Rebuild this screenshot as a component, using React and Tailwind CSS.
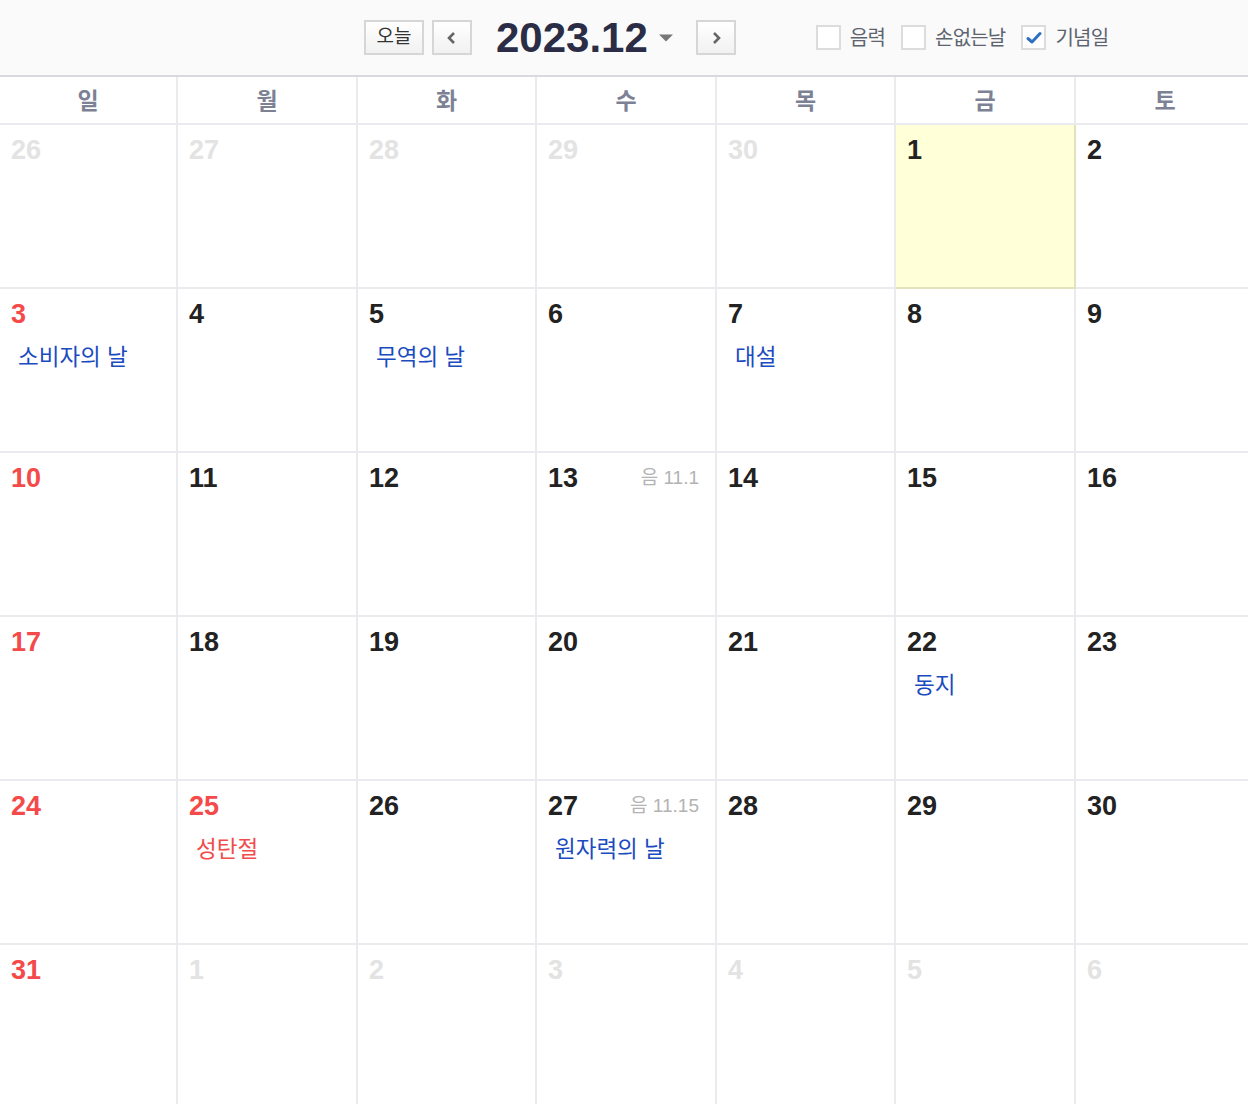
const days = ["일", "월", "화", "수", "목", "금", "토"];

const weeks = [
  [
    { d: 26, other: true },
    { d: 27, other: true },
    { d: 28, other: true },
    { d: 29, other: true },
    { d: 30, other: true },
    { d: 1, today: true },
    { d: 2 },
  ],
  [
    { d: 3, event: "소비자의 날" },
    { d: 4 },
    { d: 5, event: "무역의 날" },
    { d: 6 },
    { d: 7, event: "대설" },
    { d: 8 },
    { d: 9 },
  ],
  [
    { d: 10 },
    { d: 11 },
    { d: 12 },
    { d: 13, lunar: "11.1" },
    { d: 14 },
    { d: 15 },
    { d: 16 },
  ],
  [
    { d: 17 },
    { d: 18 },
    { d: 19 },
    { d: 20 },
    { d: 21 },
    { d: 22, event: "동지" },
    { d: 23 },
  ],
  [
    { d: 24 },
    { d: 25, holiday: "성탄절" },
    { d: 26 },
    { d: 27, lunar: "11.15", event: "원자력의 날" },
    { d: 28 },
    { d: 29 },
    { d: 30 },
  ],
  [
    { d: 31 },
    { d: 1, other: true },
    { d: 2, other: true },
    { d: 3, other: true },
    { d: 4, other: true },
    { d: 5, other: true },
    { d: 6, other: true },
  ],
];

const Checkbox = ({ checked, label }) => (
  <label className="flex items-center gap-[9px]">
    <span className="w-[25px] h-[25px] border-2 border-[#dcdcdc] bg-white flex items-center justify-center">
      {checked && (
        <svg width="16" height="14" viewBox="0 0 16 14">
          <path d="M2 7.5 L6 11 L14 2.5" fill="none" stroke="#2f6fc0" strokeWidth="3" strokeLinecap="round" strokeLinejoin="round" />
        </svg>
      )}
    </span>
    <span className="text-[20px] text-[#5d6470] tracking-[-0.8px]">{label}</span>
  </label>
);

const NavButton = ({ children, className }) => (
  <button className={"h-[35px] border-2 border-[#d6d6d6] bg-gradient-to-b from-white to-[#f1f1f1] flex items-center justify-center " + className}>
    {children}
  </button>
);

const Cell = ({ cell, col }) => {
  let numColor = "text-[#222]";
  if (cell.other) numColor = "text-[#e3e3e3]";
  else if (col === 0 || cell.holiday) numColor = "text-[#f44a4a]";
  return (
    <div
      className={
        "h-[164px] border-b-2 border-r-2 px-[11px] pt-[11px] " +
        (cell.today ? "bg-[#ffffd8] border-[#e2e2bd]" : "border-[#e9ebef] bg-white")
      }
    >
      <div className="flex items-start justify-between">
        <span className={"text-[27px] font-bold leading-[28px] " + numColor}>{cell.d}</span>
        {cell.lunar && (
          <span className="text-[19px] leading-[28px] text-[#b3b3b3] pr-[5px]">
            음 {cell.lunar}
          </span>
        )}
      </div>
      {cell.event && (
        <div className="mt-[16px] ml-[7px] text-[22.5px] leading-[28px] text-[#1b4bc0]">{cell.event}</div>
      )}
      {cell.holiday && (
        <div className="mt-[16px] ml-[7px] text-[22.5px] leading-[28px] text-[#f04c4c]">{cell.holiday}</div>
      )}
    </div>
  );
};

export default function App() {
  return (
    <div
      className="w-[1248px] h-[1104px] overflow-hidden bg-white"
      style={{ fontFamily: '"Liberation Sans", "Noto Sans CJK KR", sans-serif' }}
    >
      <div className="h-[77px] bg-[#fafafa] border-b-2 border-[#d9dadd] flex items-center">
        <div className="flex items-center ml-[364px]">
          <NavButton className="w-[60px] text-[19px] text-[#333]">오늘</NavButton>
          <NavButton className="w-[40px] ml-[8px]">
            <svg width="12" height="14" viewBox="0 0 12 14">
              <path d="M8 2 L3 7 L8 12" fill="none" stroke="#666" strokeWidth="2.6" />
            </svg>
          </NavButton>
          <div className="ml-[24px] text-[42px] font-bold text-[#2a2d45] leading-none">2023.12</div>
          <svg className="ml-[10px]" width="16" height="10" viewBox="0 0 16 10">
            <path d="M1 1.5 L15 1.5 L8 8.5 Z" fill="#777" />
          </svg>
          <NavButton className="w-[40px] ml-[22px]">
            <svg width="12" height="14" viewBox="0 0 12 14">
              <path d="M4 2 L9 7 L4 12" fill="none" stroke="#666" strokeWidth="2.6" />
            </svg>
          </NavButton>
          <div className="flex items-center gap-[16px] ml-[80px]">
            <Checkbox label="음력" />
            <Checkbox label="손없는날" />
            <Checkbox checked label="기념일" />
          </div>
        </div>
      </div>
      <div className="grid grid-cols-[178px_180px_179px_180px_179px_180px_180px] w-[1256px]">
        {days.map((d) => (
          <div
            key={d}
            className="h-[48px] border-b-2 border-r-2 border-[#e9ebef] flex items-center justify-center pt-[3px] text-[23px] font-bold text-[#7d8194]"
          >
            {d}
          </div>
        ))}
        {weeks.map((w, wi) =>
          w.map((c, ci) => <Cell key={wi + "-" + ci} cell={c} col={ci} />)
        )}
      </div>
    </div>
  );
}
